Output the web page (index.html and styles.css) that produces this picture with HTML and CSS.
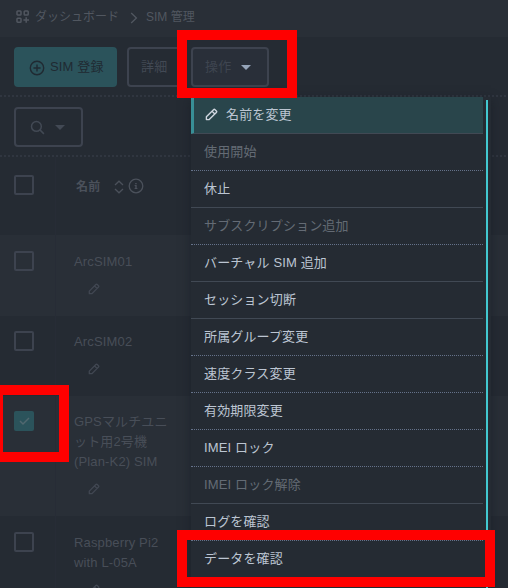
FILE: index.html
```html
<!DOCTYPE html>
<html lang="ja">
<head>
<meta charset="utf-8">
<title>SIM 管理</title>
<link rel="stylesheet" href="styles.css">
</head>
<body>
<svg class="defs" width="0" height="0">
  <symbol id="pencil" viewBox="0 0 14 14"><path d="M1.5 12.5V9.5L9.2 1.8Q10 1 10.8 1.8L12.2 3.2Q13 4 12.2 4.8L4.5 12.5ZM7.6 3.4L10.6 6.4" fill="none" stroke="currentColor" stroke-width="1.5" stroke-linejoin="round"/></symbol>
</svg>
<header class="breadcrumb">
  <svg class="grid-icon" width="14" height="14" viewBox="0 0 14 14" fill="none" stroke="currentColor" stroke-width="1.5"><rect x="1" y="1" width="4" height="4" rx=".8"/><rect x="8.2" y="1" width="4" height="4" rx=".8"/><rect x="1" y="8.2" width="4" height="4" rx=".8"/><path d="M10.2 7.2V12.8M7.4 10H13"/></svg>
  <span class="crumb-home">ダッシュボード</span>
  <svg class="chevron" width="8" height="12" viewBox="0 0 8 12"><path d="M1.2 1L6.4 6L1.2 11" fill="none" stroke="currentColor" stroke-width="1.3"/></svg>
  <span>SIM 管理</span>
</header>
<div class="toolbar">
  <button class="btn primary"><svg width="16" height="16" viewBox="0 0 16 16" fill="none" stroke="currentColor" stroke-width="1.4"><circle cx="8" cy="8" r="6.7"/><path d="M8 4.4V11.6M4.4 8H11.6"/></svg><span>SIM 登録</span></button>
  <button class="btn detail">詳細</button>
  <button class="btn actions"><span>操作</span><i class="caret"></i></button>
</div>
<div class="filters">
  <button class="btn search"><svg width="15" height="15" viewBox="0 0 15 15" fill="none" stroke="currentColor" stroke-width="1.5"><circle cx="6.4" cy="6.4" r="4.9"/><path d="M9.9 9.9L13.9 13.9"/></svg><i class="caret"></i></button>
</div>
<main class="table">
  <div class="row head">
    <div class="cell"><span class="box"></span></div>
    <div class="cell name"><b>名前</b>
      <svg class="sort" width="10" height="14" viewBox="0 0 10 14" fill="none" stroke="currentColor" stroke-width="1.3"><path d="M1 5L5 1.2L9 5M1 9L5 12.8L9 9"/></svg>
      <svg width="16" height="16" viewBox="0 0 16 16"><circle cx="8" cy="8" r="6.8" fill="none" stroke="currentColor" stroke-width="1.3"/><path d="M7.2 5H8.7V6.3H7.2ZM6.6 7.1H8.7V10.1H9.4V11H6.6V10.1H7.3V8H6.6Z" fill="currentColor"/></svg>
    </div>
  </div>
  <div class="row odd r1"><div class="cell"><span class="box"></span></div><div class="cell"><p>ArcSIM01</p><svg class="edit"><use href="#pencil"/></svg></div></div>
  <div class="row r2"><div class="cell"><span class="box"></span></div><div class="cell"><p>ArcSIM02</p><svg class="edit"><use href="#pencil"/></svg></div></div>
  <div class="row odd r3"><div class="cell"><span class="box checked"><svg width="20" height="20" viewBox="0 0 20 20"><path d="M6 10L9 13L15 7" fill="none" stroke="currentColor" stroke-width="1.5"/></svg></span></div><div class="cell"><p>GPSマルチユニ<br>ット用2号機<br>(Plan-K2) SIM</p><svg class="edit"><use href="#pencil"/></svg></div></div>
  <div class="row r4"><div class="cell"><span class="box"></span></div><div class="cell"><p>Raspberry Pi2<br>with L-05A</p><svg class="edit"><use href="#pencil"/></svg></div></div>
</main>
<div class="menu">
  <ul>
    <li class="active solid"><svg width="13" height="13"><use href="#pencil"/></svg>名前を変更</li>
    <li class="off">使用開始</li>
    <li class="solid">休止</li>
    <li class="off">サブスクリプション追加</li>
    <li class="solid">バーチャル SIM 追加</li>
    <li class="solid">セッション切断</li>
    <li>所属グループ変更</li>
    <li>速度クラス変更</li>
    <li>有効期限変更</li>
    <li>IMEI ロック</li>
    <li class="off solid">IMEI ロック解除</li>
    <li>ログを確認</li>
    <li>データを確認</li>
  </ul>
  <div class="scrollbar"></div>
</div>
<div class="mark mark-button"></div>
<div class="mark mark-check"></div>
<div class="mark mark-data"></div>
</body>
</html>
```
FILE: styles.css
```css
* { box-sizing: border-box; }
html, body { margin: 0; height: 588px; overflow: hidden; }
body { position: relative; background: #252b33; color: #484e58; font: 13px/20px "Liberation Sans", "Noto Sans CJK JP", sans-serif; letter-spacing: .15px; }
.defs { position: absolute; }
.breadcrumb { height: 37px; display: flex; align-items: center; padding: 0 0 4px 16px; background: #292f37; color: #515760; white-space: nowrap; font-size: 12px; letter-spacing: 0; }
.crumb-home { margin: 0 11px 0 5px; }
.chevron { margin-right: 8px; position: relative; top: 1px; }
.grid-icon { flex: none; }
.toolbar { height: 60px; display: flex; gap: 10px; padding: 10px 14px 0; }
.toolbar, .filters { background: radial-gradient(circle at 1px 1px, #303640 1px, transparent 1.2px) left bottom / 4px 2px repeat-x; }
.filters { height: 60px; padding: 10px 14px 0; }
.btn { height: 40px; flex: none; display: flex; align-items: center; border: 2px solid #3d434f; border-radius: 4px; background: transparent; color: #424954; padding: 0 0 1px; font: inherit; letter-spacing: inherit; white-space: nowrap; }
.primary { width: 103px; gap: 5px; padding-left: 13px; background: #2b535b; border-color: #2b535b; color: #202a32; }
.primary svg { position: relative; top: 1px; }
.detail { width: 54px; padding-left: 12px; }
.actions { width: 78px; padding-left: 12px; background: #292f39; color: #3e4550; }
.caret { border: 5px solid transparent; border-top-color: #424954; border-bottom: 0; }
.actions .caret { margin: 2px 0 0 10px; border-top-color: #95a4b9; }
.search { width: 69px; padding: 0 0 0 14px; gap: 10px; }
.search .caret { margin-top: 1px; }
.row { display: grid; grid-template-columns: 55px 1fr; }
.odd { background: #292f37; }
.cell { padding: 16px 0 0 14px; }
.cell + .cell { padding: 17px 0 0 18px; border-left: 1px solid #272c36; }
.cell p { margin: 0; }
.head { height: 78px; color: #4b515b; }
.head .cell { padding-top: 18px; }
.head .cell.name { display: flex; align-items: flex-start; padding: 21px 0 0 20px; font-size: 12px; line-height: 16px; }
.name b { margin-right: 14px; line-height: 18px; }
.sort { margin: 2px 4px 0 0; }
.r1 { height: 81px; }
.r2 { height: 80px; }
.r2 .cell { padding-top: 15px; }
.r2 .cell + .cell { padding-top: 16px; }
.r3 { height: 120px; }
.r3 .cell { padding-top: 15px; }
.r3 .cell + .cell { padding-top: 16px; }
.r4 { height: 90px; }
.box { display: block; width: 20px; height: 20px; border: 2px solid #3d434f; border-radius: 2px; }
.checked { border: 0; background: #2b535b; color: #50686f; }
.checked svg { display: block; }
.edit { display: block; width: 12px; height: 12px; margin: 11px 0 0 14px; color: #414752; }
.menu { position: absolute; left: 191px; top: 97px; width: 300px; height: 491px; display: flex; gap: 3px; background: #252b33; box-shadow: 0 3px 10px rgba(20, 24, 32, .5); color: #bcc5d2; }
.menu ul { width: 292px; margin: 0; padding: 0; list-style: none; }
.menu li { height: 37px; padding: 8px 0 0 13px; border-bottom: 1px dotted #65728a; }
.menu li.solid { border-bottom: 1px solid #414954; }
.menu li.off { color: #646b75; }
.menu li.active { display: flex; gap: 8px; background: #29454b; border-left: 3px solid #388f96; padding-left: 11px; }
.active svg { margin-top: 3px; color: #d0d7e0; }
.scrollbar { width: 2px; margin-top: 3px; background: #42c8d0; }
.mark { position: absolute; border: 10px solid #f00; }
.mark-button { left: 177px; top: 30px; width: 120px; height: 68px; }
.mark-check { left: -7px; top: 385px; width: 76px; height: 77px; }
.mark-data { left: 177px; top: 530px; width: 318px; height: 57px; }
```
